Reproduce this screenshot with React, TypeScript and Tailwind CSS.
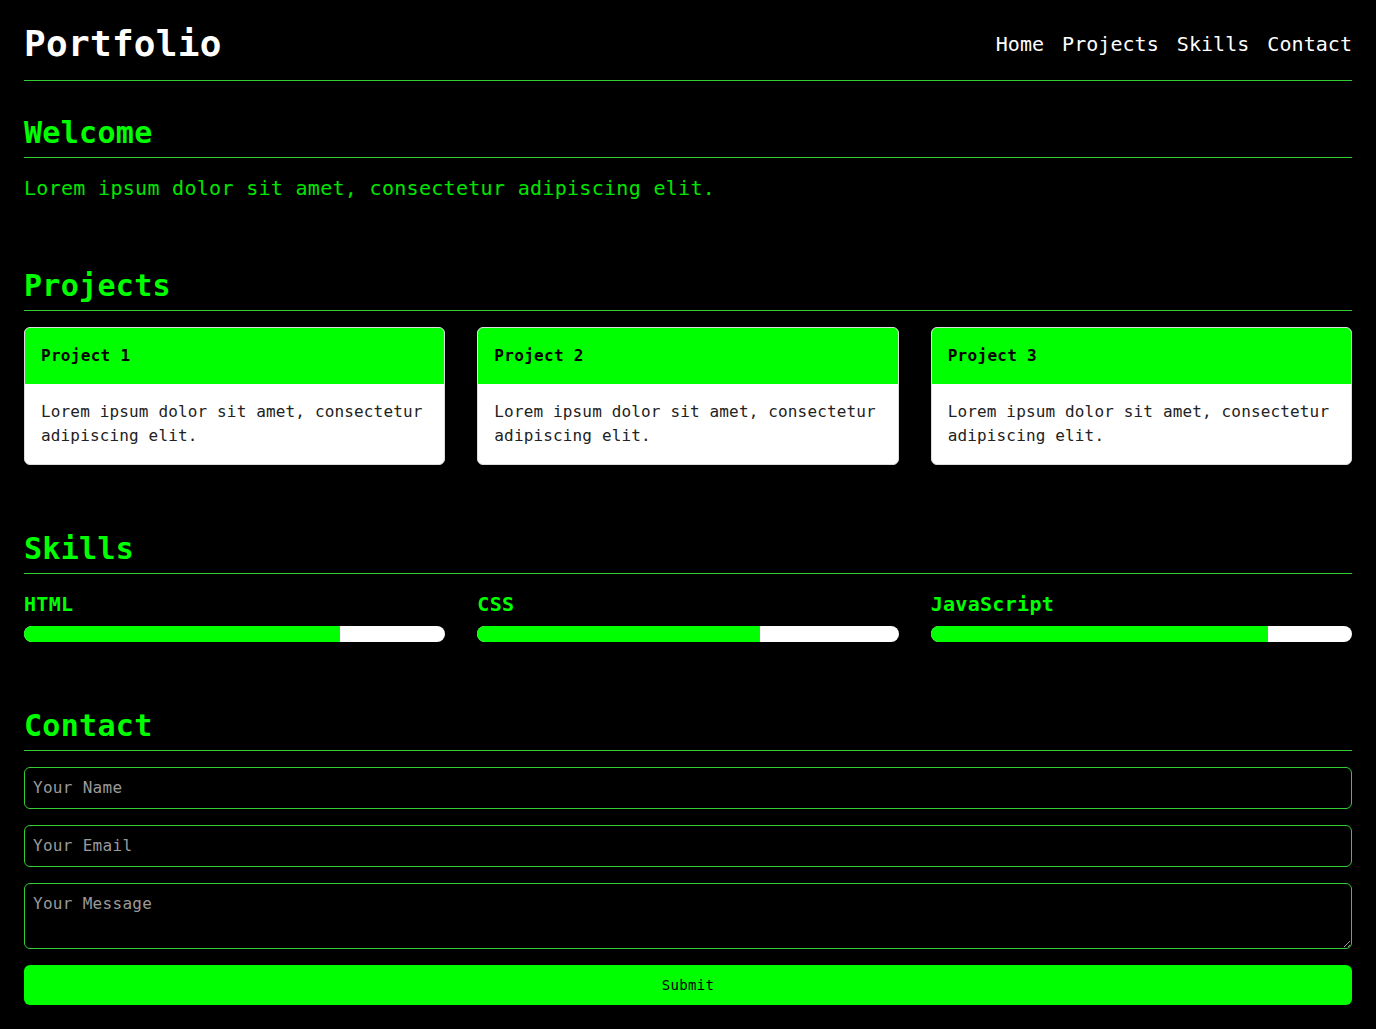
import React from 'react';

const projects = ['Project 1', 'Project 2', 'Project 3'];

const skills = [
  { name: 'HTML', level: 75 },
  { name: 'CSS', level: 67 },
  { name: 'JavaScript', level: 80 },
];

const App = () => {
  return (
    <div className="min-h-screen bg-black px-6 pb-6 font-['DejaVu_Sans_Mono',monospace] tracking-[0.3px]">
      {/* Header */}
      <header className="flex items-center justify-between border-b border-[#33cc33] pt-6 pb-4">
        <h1 className="text-4xl font-bold text-white">Portfolio</h1>
        <nav className="flex gap-[18px] text-xl tracking-[0.05px] text-white">
          <a href="#home">Home</a>
          <a href="#projects">Projects</a>
          <a href="#skills">Skills</a>
          <a href="#contact">Contact</a>
        </nav>
      </header>

      {/* Welcome */}
      <section className="mt-8 pt-0.5">
        <h2 className="mb-4 border-b border-[#33cc33] pb-1.5 text-3xl font-bold text-[#00ff00]">Welcome</h2>
        <p className="text-xl text-[#00e600]">Lorem ipsum dolor sit amet, consectetur adipiscing elit.</p>
      </section>

      {/* Projects */}
      <section className="mt-16 pt-0.5">
        <h2 className="mb-4 border-b border-[#33cc33] pb-1.5 text-3xl font-bold text-[#00ff00]">Projects</h2>
        <div className="grid grid-cols-3 gap-8">
          {projects.map((p) => (
            <div key={p} className="overflow-hidden rounded-md border border-[#dddddd] bg-white">
              <div className="bg-[#00ff00] p-4 text-base font-bold text-black">{p}</div>
              <div className="p-4 text-base tracking-[0.15px] text-[#222222]">
                Lorem ipsum dolor sit amet, consectetur adipiscing elit.
              </div>
            </div>
          ))}
        </div>
      </section>

      {/* Skills */}
      <section className="mt-16 pt-0.5">
        <h2 className="mb-4 border-b border-[#33cc33] pb-1.5 text-3xl font-bold text-[#00ff00]">Skills</h2>
        <div className="grid grid-cols-3 gap-8">
          {skills.map((s) => (
            <div key={s.name}>
              <div className="text-xl font-bold text-[#00ff00]">{s.name}</div>
              <div className="mt-2 h-4 overflow-hidden rounded-full bg-white">
                <div className="h-full bg-[#00ff00]" style={{ width: `${s.level}%` }} />
              </div>
            </div>
          ))}
        </div>
      </section>

      {/* Contact */}
      <section className="mt-16 pt-0.5">
        <h2 className="mb-4 border-b border-[#33cc33] pb-1.5 text-3xl font-bold text-[#00ff00]">Contact</h2>
        <form className="flex flex-col gap-4" onSubmit={(e) => e.preventDefault()}>
          <input
            type="text"
            placeholder="Your Name"
            className="w-full rounded-md border border-[#33cc33] bg-black p-2 text-base text-white placeholder:text-[#9a9a9a]"
          />
          <input
            type="email"
            placeholder="Your Email"
            className="w-full rounded-md border border-[#33cc33] bg-black p-2 text-base text-white placeholder:text-[#9a9a9a]"
          />
          <textarea
            rows={2}
            placeholder="Your Message"
            className="w-full rounded-md border border-[#33cc33] bg-black p-2 text-base text-white placeholder:text-[#9a9a9a]"
          />
          <button type="submit" className="w-full rounded-md bg-[#00ff00] py-2.5 text-sm text-black">
            Submit
          </button>
        </form>
      </section>
    </div>
  );
};

export default App;
